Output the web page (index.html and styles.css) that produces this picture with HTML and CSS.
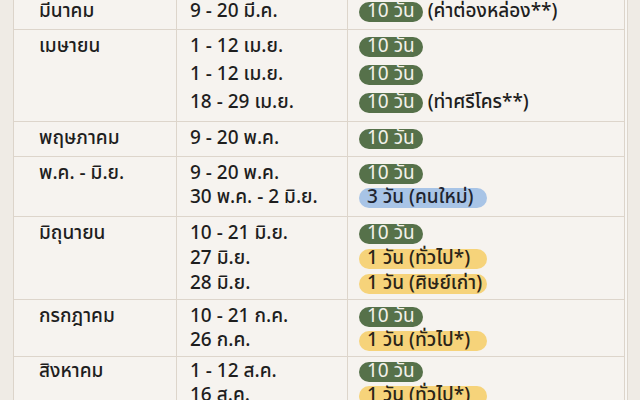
FILE: index.html
```html
<!DOCTYPE html>
<html lang="th">
<head>
<meta charset="utf-8">
<link rel="stylesheet" href="styles.css">
</head>
<body>
<div class="card">
  <div class="row r1">
    <div class="cell month"><div class="ln">มีนาคม</div></div>
    <div class="cell dates"><div class="ln">9 - 20 มี.ค.</div></div>
    <div class="cell tags"><div class="ln"><span class="pill green">10 วัน</span><span class="note">(ค่าต่องหล่อง**)</span></div></div>
  </div>
  <div class="row r2">
    <div class="cell month"><div class="ln">เมษายน</div></div>
    <div class="cell dates"><div class="ln">1 - 12 เม.ย.</div><div class="ln">1 - 12 เม.ย.</div><div class="ln">18 - 29 เม.ย.</div></div>
    <div class="cell tags"><div class="ln"><span class="pill green">10 วัน</span></div><div class="ln"><span class="pill green">10 วัน</span></div><div class="ln"><span class="pill green">10 วัน</span><span class="note">(ท่าศรีโคร**)</span></div></div>
  </div>
  <div class="row r3">
    <div class="cell month"><div class="ln">พฤษภาคม</div></div>
    <div class="cell dates"><div class="ln">9 - 20 พ.ค.</div></div>
    <div class="cell tags"><div class="ln"><span class="pill green">10 วัน</span></div></div>
  </div>
  <div class="row r4">
    <div class="cell month"><div class="ln">พ.ค. - มิ.ย.</div></div>
    <div class="cell dates"><div class="ln">9 - 20 พ.ค.</div><div class="ln">30 พ.ค. - 2 มิ.ย.</div></div>
    <div class="cell tags"><div class="ln"><span class="pill green">10 วัน</span></div><div class="ln"><span class="pill blue">3 วัน (คนใหม่)</span></div></div>
  </div>
  <div class="row r5">
    <div class="cell month"><div class="ln">มิถุนายน</div></div>
    <div class="cell dates"><div class="ln">10 - 21 มิ.ย.</div><div class="ln">27 มิ.ย.</div><div class="ln">28 มิ.ย.</div></div>
    <div class="cell tags"><div class="ln"><span class="pill green">10 วัน</span></div><div class="ln"><span class="pill yellow">1 วัน (ทั่วไป*)</span></div><div class="ln"><span class="pill yellow">1 วัน (ศิษย์เก่า)</span></div></div>
  </div>
  <div class="row r6">
    <div class="cell month"><div class="ln">กรกฎาคม</div></div>
    <div class="cell dates"><div class="ln">10 - 21 ก.ค.</div><div class="ln">26 ก.ค.</div></div>
    <div class="cell tags"><div class="ln"><span class="pill green">10 วัน</span></div><div class="ln"><span class="pill yellow">1 วัน (ทั่วไป*)</span></div></div>
  </div>
  <div class="row r7">
    <div class="cell month"><div class="ln">สิงหาคม</div></div>
    <div class="cell dates"><div class="ln">1 - 12 ส.ค.</div><div class="ln">16 ส.ค.</div></div>
    <div class="cell tags"><div class="ln"><span class="pill green">10 วัน</span></div><div class="ln"><span class="pill yellow">1 วัน (ทั่วไป*)</span></div></div>
  </div>
</div>
</body>
</html>
```
FILE: styles.css
```css
html, body {
  margin: 0;
  padding: 0;
  background: #efebe5;
  overflow: hidden;
}
body {
  width: 640px;
  height: 400px;
  font-family: "Noto Sans Thai", "Noto Sans", "Liberation Sans", sans-serif;
  font-size: 19px;
  font-weight: 500;
  color: #1e1e1e;
}
.card {
  margin: -6px 0 0 13px;
  width: 610px;
  background: #f6f3ef;
  border: 1px solid #dcd4ca;
  box-shadow: 2px 0 0 #f8f6f3, 3px 0 0 #ddd6cd;
}
.row {
  display: grid;
  grid-template-columns: 162px 171px 1fr;
  border-top: 1px solid #ddd5cb;
}
.row:first-child { border-top: none; }
.cell {
  display: flex;
  flex-direction: column;
}
.cell + .cell { border-left: 1px solid #ddd5cb; }
.month { padding-left: 25px; }
.dates { padding-left: 13px; }
.tags { padding-left: 11px; }
.ln {
  height: 24px;
  line-height: 24px;
  display: flex;
  align-items: center;
  white-space: nowrap;
}
.r1 .cell { padding-top: 5px; padding-bottom: 5px; }
.r2 .cell { padding-top: 3px; padding-bottom: 4px; }
.r2 .ln, .r3 .ln { height: 28px; }
.r3 .cell { padding-top: 3px; padding-bottom: 3px; }
.r4 .cell { padding-top: 5px; padding-bottom: 6px; }
.r5 .cell { padding-top: 4px; padding-bottom: 3px; }
.r5 .ln { height: 25px; }
.r6 .cell { padding-top: 5px; padding-bottom: 3px; }
.r7 .cell { padding-top: 3px; padding-bottom: 5px; }
.pill {
  display: inline-block;
  height: 20px;
  line-height: 20px;
  padding: 0 8px;
  border-radius: 10px;
  box-sizing: border-box;
}
.pill.green { background: #56714a; color: #f3f1ea; font-weight: 400; }
.pill.blue { background: #a8c4e6; color: #1f2430; width: 128px; }
.pill.yellow { background: #f6d37a; color: #2a2418; width: 128px; }
.note { margin-left: 5px; }
```
